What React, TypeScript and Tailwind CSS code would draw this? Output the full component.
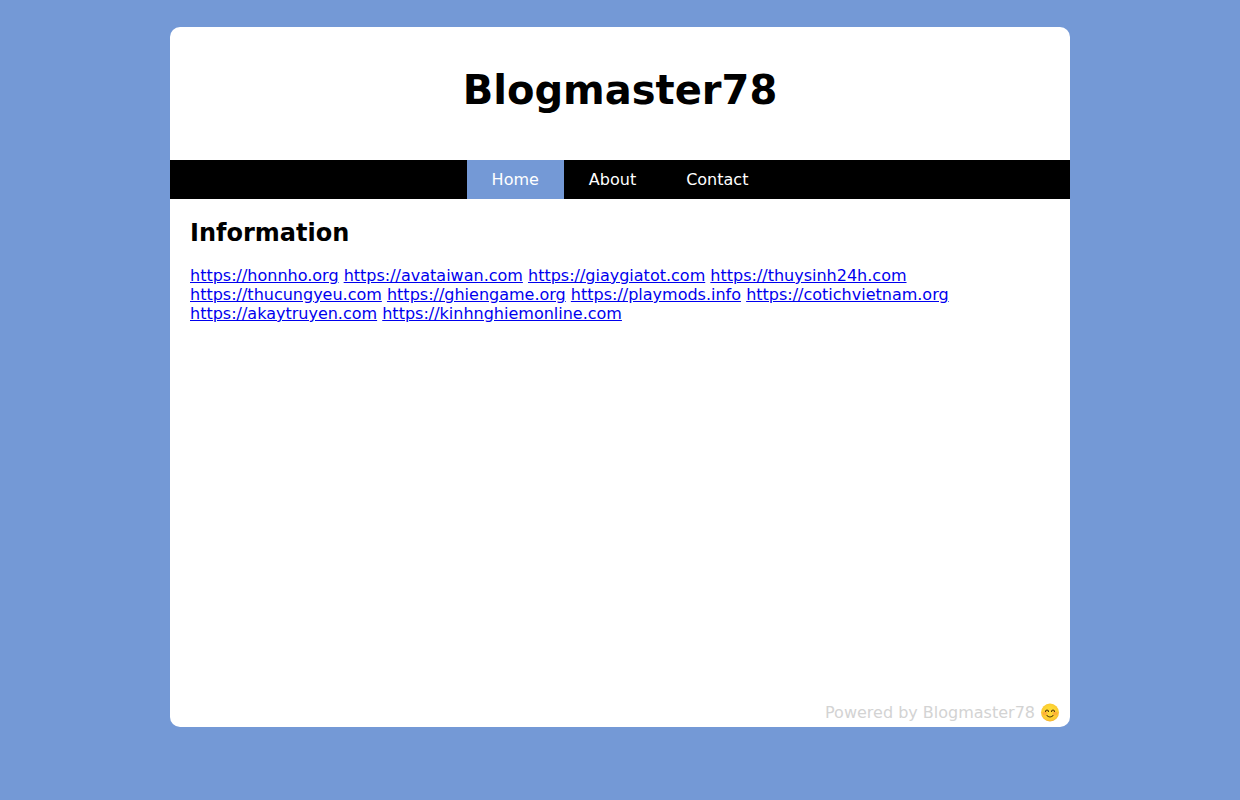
const navItems = [
  { label: 'Home', href: '#home', active: true },
  { label: 'About', href: '#about', active: false },
  { label: 'Contact', href: '#contact', active: false }
]

const links = [
  'https://honnho.org',
  'https://avataiwan.com',
  'https://giaygiatot.com',
  'https://thuysinh24h.com',
  'https://thucungyeu.com',
  'https://ghiengame.org',
  'https://playmods.info',
  'https://cotichvietnam.org',
  'https://akaytruyen.com',
  'https://kinhnghiemonline.com'
]

const Navigation = () => (
  <nav className="bg-black">
    <ul className="flex justify-center">
      {navItems.map(({ label, href, active }) => (
        <li key={label}>
          <a
            href={href}
            className={`block px-[25px] py-[10px] text-white ${active ? 'bg-[#7499d6]' : 'hover:bg-[#7499d6]'}`}>
            {label}
          </a>
        </li>
      ))}
    </ul>
  </nav>
)

const LinkList = () => (
  <p>
    {links.map((link) => (
      <span key={link}>
        <a href={link} className="text-[#0000ee] underline">
          {link}
        </a>{' '}
      </span>
    ))}
  </p>
)

const SmileIcon = () => (
  <svg viewBox="0 0 40 38" className="h-[19px] w-5" role="img" aria-label="Smiling face">
    <defs>
      <radialGradient id="face" cx="50%" cy="45%" r="54%">
        <stop offset="50%" stopColor="#fdd835" />
        <stop offset="88%" stopColor="#fbc832" />
        <stop offset="100%" stopColor="#f2ac2c" />
      </radialGradient>
    </defs>
    <circle cx="20" cy="19" r="18" fill="url(#face)" />
    <ellipse cx="10" cy="21" rx="5" ry="4" fill="#ff9a3c" opacity="0.6" />
    <ellipse cx="30" cy="21" rx="5" ry="4" fill="#ff9a3c" opacity="0.6" />
    <g fill="none" stroke="#4f340c" strokeWidth="2.2" strokeLinecap="round">
      <path d="M11 17c1-4 5-4 6 0" />
      <path d="M23 17c1-4 5-4 6 0" />
      <path d="M14 25c3 4 9 4 12 0" />
    </g>
  </svg>
)

const App = () => {
  return (
    <div className="min-h-screen bg-[#7499d6] px-4 pt-[27px] pb-12 font-['DejaVu_Sans',sans-serif] text-base leading-[19px] text-black">
      <div className="mx-auto flex min-h-[700px] max-w-[900px] flex-col overflow-hidden rounded-[10px] bg-white">
        <header className="px-5 pt-10 pb-[46px] text-center">
          <h1 className="text-[40px] leading-[47px] font-bold">Blogmaster78</h1>
        </header>
        <Navigation />
        <main className="flex-1 p-5">
          <h2 className="mb-[19px] text-2xl leading-7 font-bold">Information</h2>
          <LinkList />
        </main>
        <footer className="flex items-center justify-end gap-[5px] px-[10px] pb-[5px] text-[#d3d3d3]">
          <span>Powered by Blogmaster78</span>
          <SmileIcon />
        </footer>
      </div>
    </div>
  )
}

export default App
